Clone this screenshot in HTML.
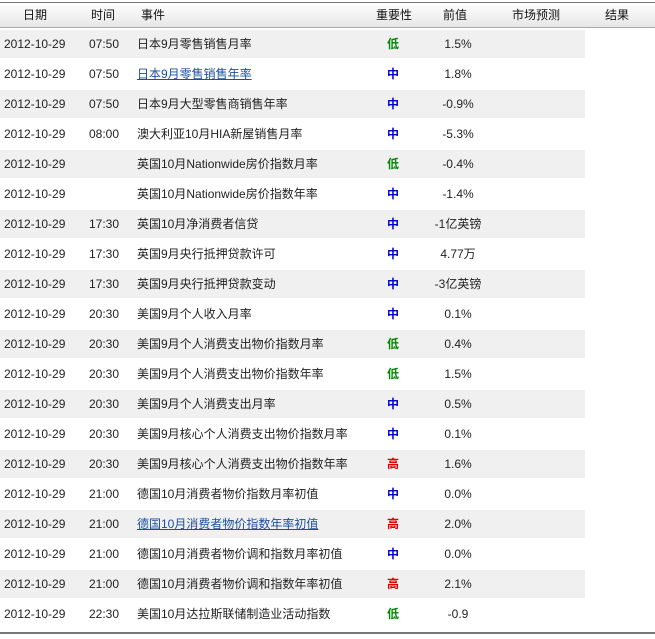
<!DOCTYPE html>
<html><head><meta charset="utf-8"><style>
body{margin:0;width:655px;height:639px;background:#fff;font-family:"Liberation Sans","Noto Sans CJK SC","WenQuanYi Zen Hei",sans-serif;font-size:12px;color:#222;position:relative;overflow:hidden}
.hd{position:absolute;left:0;top:2px;width:655px;height:24px;border-top:1px solid #777;border-bottom:1px solid #aaa;background:linear-gradient(#fff,#e6e6e6)}
.hd span,.r span{position:absolute;top:0;white-space:nowrap}
.hd span{line-height:24px;color:#111}
.r{position:absolute;left:0;width:655px;height:30px;line-height:30px}
.r.s::before{content:"";position:absolute;left:0;top:1px;width:585px;height:28px;background:#f0f0f0}
.r span{z-index:1}
.d{left:4px}.t{left:89px}.e{left:137px}
.i{left:382px;width:22px;text-align:center;font-weight:bold}
.p{left:420px;width:76px;text-align:center}
.L{color:#080}.M{color:#00c}.H{color:#d00}
a{color:#1a4f9c}
.bt{position:absolute;left:0;top:632px;width:655px;border-top:2px solid #777}
</style></head><body>
<div class="hd"><span style="left:23px">日期</span><span style="left:91px">时间</span><span style="left:141px">事件</span><span style="left:376px">重要性</span><span style="left:443px">前值</span><span style="left:512px">市场预测</span><span style="left:605px">结果</span></div>
<div class="r s" style="top:29px"><span class="d">2012-10-29</span><span class="t">07:50</span><span class="e">日本9月零售销售月率</span><span class="i L">低</span><span class="p">1.5%</span></div>
<div class="r" style="top:59px"><span class="d">2012-10-29</span><span class="t">07:50</span><span class="e"><a href="#">日本9月零售销售年率</a></span><span class="i M">中</span><span class="p">1.8%</span></div>
<div class="r s" style="top:89px"><span class="d">2012-10-29</span><span class="t">07:50</span><span class="e">日本9月大型零售商销售年率</span><span class="i M">中</span><span class="p">-0.9%</span></div>
<div class="r" style="top:119px"><span class="d">2012-10-29</span><span class="t">08:00</span><span class="e">澳大利亚10月HIA新屋销售月率</span><span class="i M">中</span><span class="p">-5.3%</span></div>
<div class="r s" style="top:149px"><span class="d">2012-10-29</span><span class="e">英国10月Nationwide房价指数月率</span><span class="i L">低</span><span class="p">-0.4%</span></div>
<div class="r" style="top:179px"><span class="d">2012-10-29</span><span class="e">英国10月Nationwide房价指数年率</span><span class="i M">中</span><span class="p">-1.4%</span></div>
<div class="r s" style="top:209px"><span class="d">2012-10-29</span><span class="t">17:30</span><span class="e">英国10月净消费者信贷</span><span class="i M">中</span><span class="p">-1亿英镑</span></div>
<div class="r" style="top:239px"><span class="d">2012-10-29</span><span class="t">17:30</span><span class="e">英国9月央行抵押贷款许可</span><span class="i M">中</span><span class="p">4.77万</span></div>
<div class="r s" style="top:269px"><span class="d">2012-10-29</span><span class="t">17:30</span><span class="e">英国9月央行抵押贷款变动</span><span class="i M">中</span><span class="p">-3亿英镑</span></div>
<div class="r" style="top:299px"><span class="d">2012-10-29</span><span class="t">20:30</span><span class="e">美国9月个人收入月率</span><span class="i M">中</span><span class="p">0.1%</span></div>
<div class="r s" style="top:329px"><span class="d">2012-10-29</span><span class="t">20:30</span><span class="e">美国9月个人消费支出物价指数月率</span><span class="i L">低</span><span class="p">0.4%</span></div>
<div class="r" style="top:359px"><span class="d">2012-10-29</span><span class="t">20:30</span><span class="e">美国9月个人消费支出物价指数年率</span><span class="i L">低</span><span class="p">1.5%</span></div>
<div class="r s" style="top:389px"><span class="d">2012-10-29</span><span class="t">20:30</span><span class="e">美国9月个人消费支出月率</span><span class="i M">中</span><span class="p">0.5%</span></div>
<div class="r" style="top:419px"><span class="d">2012-10-29</span><span class="t">20:30</span><span class="e">美国9月核心个人消费支出物价指数月率</span><span class="i M">中</span><span class="p">0.1%</span></div>
<div class="r s" style="top:449px"><span class="d">2012-10-29</span><span class="t">20:30</span><span class="e">美国9月核心个人消费支出物价指数年率</span><span class="i H">高</span><span class="p">1.6%</span></div>
<div class="r" style="top:479px"><span class="d">2012-10-29</span><span class="t">21:00</span><span class="e">德国10月消费者物价指数月率初值</span><span class="i M">中</span><span class="p">0.0%</span></div>
<div class="r s" style="top:509px"><span class="d">2012-10-29</span><span class="t">21:00</span><span class="e"><a href="#">德国10月消费者物价指数年率初值</a></span><span class="i H">高</span><span class="p">2.0%</span></div>
<div class="r" style="top:539px"><span class="d">2012-10-29</span><span class="t">21:00</span><span class="e">德国10月消费者物价调和指数月率初值</span><span class="i M">中</span><span class="p">0.0%</span></div>
<div class="r s" style="top:569px"><span class="d">2012-10-29</span><span class="t">21:00</span><span class="e">德国10月消费者物价调和指数年率初值</span><span class="i H">高</span><span class="p">2.1%</span></div>
<div class="r" style="top:599px"><span class="d">2012-10-29</span><span class="t">22:30</span><span class="e">美国10月达拉斯联储制造业活动指数</span><span class="i L">低</span><span class="p">-0.9</span></div>
<div class="bt"></div>
</body></html>
